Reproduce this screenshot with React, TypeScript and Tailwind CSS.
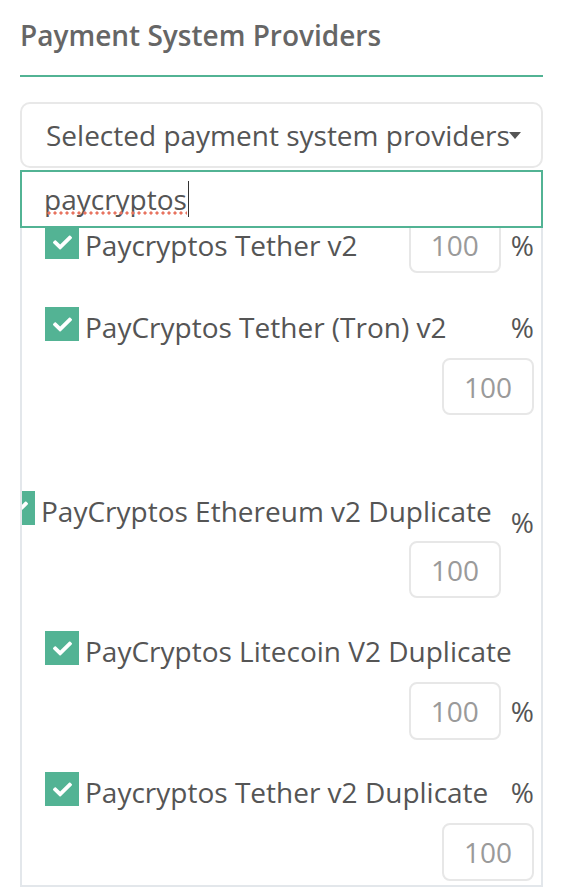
import { FaCheck } from 'react-icons/fa'

function Box({ className = '-mt-px' }: { className?: string }) {
  return (
    <span className={`flex h-[34px] w-[34px] shrink-0 items-center justify-center bg-[#53b394] ${className}`}>
      <FaCheck className="h-[19px] w-[19px] text-white" />
    </span>
  )
}

function Label({ text, shift, tight }: { text: string; shift?: boolean; tight?: boolean }) {
  return (
    <div className={`flex min-w-0 flex-1 items-start ${shift ? '-ml-[44px]' : ''}`}>
      <Box className={tight ? '-mt-[3px]' : '-mt-px'} />
      <span className={`ml-[6px] whitespace-nowrap ${tight ? 'leading-[34px]' : 'leading-[38px]'}`}>{text}</span>
    </div>
  )
}

function Amount({ className = '' }: { className?: string }) {
  return (
    <div
      className={`flex h-[57px] w-[92px] shrink-0 items-center justify-center rounded-[8px] border-2 border-[#e7e7e7] leading-[34px] text-[#9a9a9a] ${className}`}
    >
      100
    </div>
  )
}

function Pct({ className = 'leading-[38px]' }: { className?: string }) {
  return <span className={`shrink-0 ${className}`}>%</span>
}

export default function App() {
  return (
    <div className="h-[888px] w-[561px] overflow-hidden bg-white pl-[20px] pr-[18px] font-['Open_Sans',sans-serif] text-[28px] text-[#555]">
      <h2 className="border-b-2 border-[#52b394] pt-[16px] pb-[21px] text-[28px] font-semibold leading-[38px] text-[#666]">
        Payment System Providers
      </h2>

      {/* select */}
      <div className="relative mt-[25px] flex h-[66px] items-center overflow-hidden rounded-[10px] border-2 border-[#e8e8e8] pl-[24px]">
        <span className="whitespace-nowrap leading-[38px]">Selected payment system providers</span>
        <span className="absolute right-[20px] top-[28px] h-0 w-0 border-l-[6px] border-r-[6px] border-t-[7px] border-l-transparent border-r-transparent border-t-[#555]" />
      </div>

      {/* search */}
      <div className="mt-[2px] flex h-[58px] items-center border-2 border-[#52b394] pl-[22px]">
        <span className="relative leading-[38px]">
          paycryptos
          <span className="absolute left-[2px] right-0 top-[31px] h-[4px] bg-[radial-gradient(circle,#e8735f_1.3px,transparent_1.9px)] bg-[length:6px_4px]" />
        </span>
        <span className="ml-px h-[36px] w-[1.5px] bg-[#333]" />
      </div>

      {/* dropdown list */}
      <div className="overflow-hidden border-x-2 border-b-2 border-[#e3e7eb] pl-[23px] pr-[7px] pb-[4px]">
        {/* item 1 */}
        <div className="flex h-[45px] items-start">
          <Label text="Paycryptos Tether v2" tight />
          <Amount className="-mt-[12px] mr-[10px]" />
          <Pct className="leading-[34px]" />
        </div>

        {/* item 2 */}
        <div className="mt-[35px]">
          <div className="flex items-start">
            <Label text="PayCryptos Tether (Tron) v2" />
            <Pct />
          </div>
          <div className="mt-[12px] flex justify-end">
            <Amount />
          </div>
        </div>

        {/* item 3 */}
        <div className="mt-[77px]">
          <div className="flex items-start">
            <Label text="PayCryptos Ethereum v2 Duplicate" shift />
            <Pct className="mt-[11px] leading-[38px]" />
          </div>
          <div className="flex justify-end">
            <Amount className="mr-[33px]" />
          </div>
        </div>

        {/* item 4 */}
        <div className="mt-[34px]">
          <div className="flex items-start">
            <Label text="PayCryptos Litecoin V2 Duplicate" />
          </div>
          <div className="mt-[12px] flex items-center justify-end">
            <Amount className="mr-[10px] h-[58px]" />
            <Pct />
          </div>
        </div>

        {/* item 5 */}
        <div className="mt-[33px]">
          <div className="flex items-start">
            <Label text="Paycryptos Tether v2 Duplicate" />
            <Pct />
          </div>
          <div className="mt-[12px] flex justify-end">
            <Amount className="h-[58px]" />
          </div>
        </div>
      </div>
    </div>
  )
}
